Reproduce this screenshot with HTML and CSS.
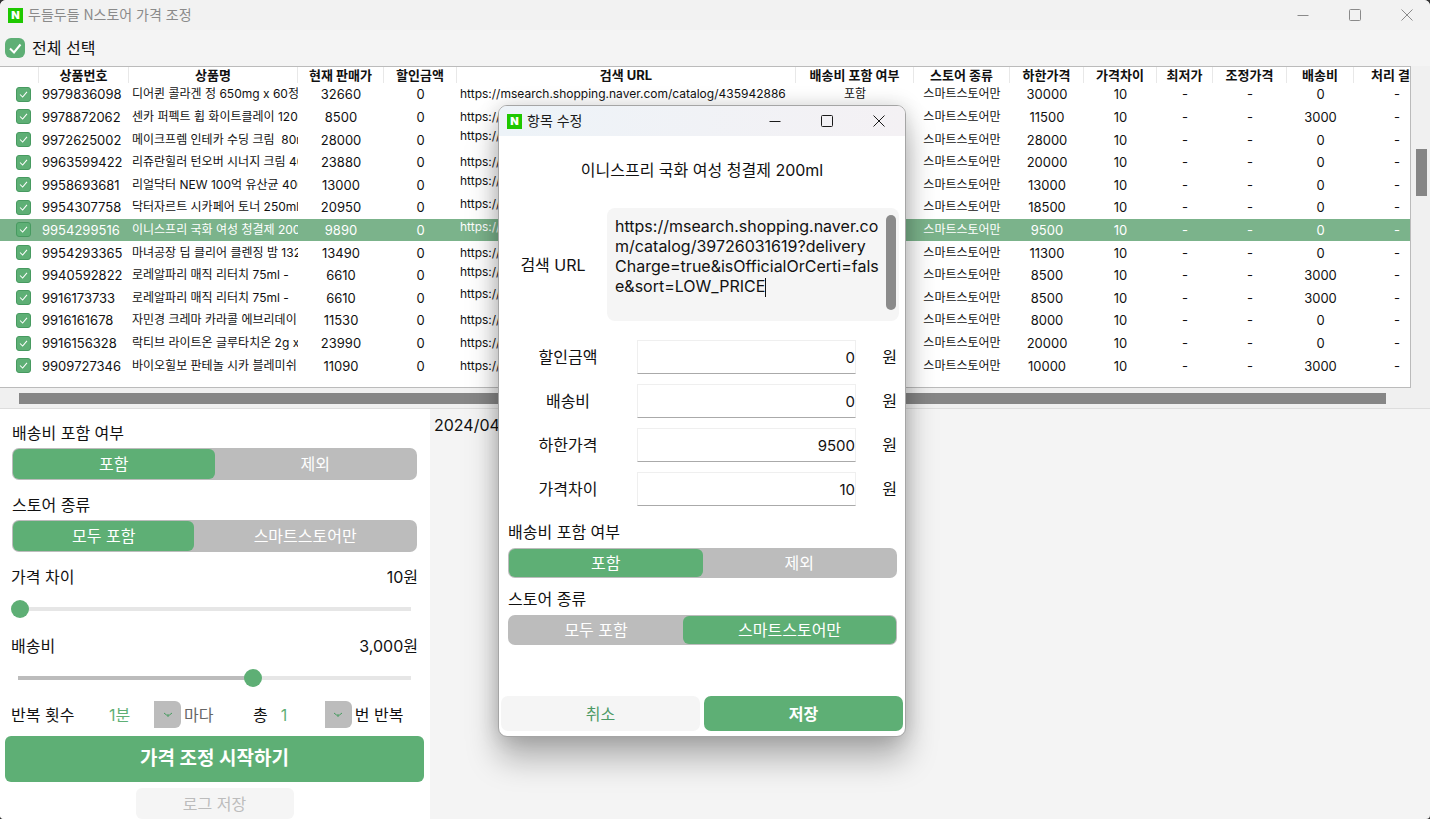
FILE: index.html
```html
<!DOCTYPE html>
<html lang="ko">
<head>
<meta charset="utf-8">
<title>두들두들 N스토어 가격 조정</title>
<link rel="stylesheet" href="styles.css">
</head>
<body>
<div class="app">
  <header class="titlebar">
    <span class="logo">N</span>
    <h1 class="titlebar-text">두들두들 N스토어 가격 조정</h1>
    <button class="win-btn" aria-label="최소화"><svg viewBox="0 0 12 12"><path d="M.5 6.5h11"/></svg></button>
    <button class="win-btn" aria-label="최대화"><svg viewBox="0 0 12 12"><rect x=".5" y=".5" width="11" height="11" rx="1"/></svg></button>
    <button class="win-btn" aria-label="닫기"><svg viewBox="0 0 12 12"><path d="M.5.5l11 11M11.5.5l-11 11"/></svg></button>
  </header>

  <label class="select-all"><input type="checkbox" class="check check-large" checked>전체 선택</label>

  <section class="grid-area">
    <div class="table-view">
      <table class="items">
        <colgroup>
          <col class="c-check"><col class="c-id"><col class="c-name"><col class="c-price"><col class="c-discount"><col class="c-url"><col class="c-include"><col class="c-store"><col class="c-min"><col class="c-gap"><col class="c-low"><col class="c-adjust"><col class="c-ship"><col class="c-result">
        </colgroup>
        <thead>
          <tr><th></th><th>상품번호</th><th>상품명</th><th>현재 판매가</th><th>할인금액</th><th>검색 URL</th><th>배송비 포함 여부</th><th>스토어 종류</th><th>하한가격</th><th>가격차이</th><th>최저가</th><th>조정가격</th><th>배송비</th><th>처리 결과</th></tr>
        </thead>
        <tbody>
          <tr><td class="pick"><input type="checkbox" class="check" aria-label="선택" checked></td><td class="left">9979836098</td><td class="left text">디어퀸 콜라겐 정 650mg x 60정</td><td>32660</td><td>0</td><td class="left text">https://msearch.shopping.naver.com/catalog/435942886</td><td class="text">포함</td><td class="text">스마트스토어만</td><td>30000</td><td>10</td><td>-</td><td>-</td><td>0</td><td>-</td></tr>
          <tr><td class="pick"><input type="checkbox" class="check" aria-label="선택" checked></td><td class="left">9978872062</td><td class="left text">센카 퍼펙트 휩 화이트클레이 120g</td><td>8500</td><td>0</td><td class="left text">https://msearch.shopping.naver.com</td><td class="text">포함</td><td class="text">스마트스토어만</td><td>11500</td><td>10</td><td>-</td><td>-</td><td>3000</td><td>-</td></tr>
          <tr><td class="pick"><input type="checkbox" class="check" aria-label="선택" checked></td><td class="left">9972625002</td><td class="left text">메이크프렘 인테카 수딩 크림 &nbsp;80ml</td><td>28000</td><td>0</td><td class="left text raised">https://msearch.shopping.naver.com</td><td class="text">포함</td><td class="text">스마트스토어만</td><td>28000</td><td>10</td><td>-</td><td>-</td><td>0</td><td>-</td></tr>
          <tr><td class="pick"><input type="checkbox" class="check" aria-label="선택" checked></td><td class="left">9963599422</td><td class="left text">리쥬란힐러 턴오버 시너지 크림 40</td><td>23880</td><td>0</td><td class="left text">https://msearch.shopping.naver.com</td><td class="text">포함</td><td class="text">스마트스토어만</td><td>20000</td><td>10</td><td>-</td><td>-</td><td>0</td><td>-</td></tr>
          <tr><td class="pick"><input type="checkbox" class="check" aria-label="선택" checked></td><td class="left">9958693681</td><td class="left text">리얼닥터 NEW 100억 유산균 400</td><td>13000</td><td>0</td><td class="left text raised">https://msearch.shopping.naver.com</td><td class="text">포함</td><td class="text">스마트스토어만</td><td>13000</td><td>10</td><td>-</td><td>-</td><td>0</td><td>-</td></tr>
          <tr><td class="pick"><input type="checkbox" class="check" aria-label="선택" checked></td><td class="left">9954307758</td><td class="left text">닥터자르트 시카페어 토너 250ml</td><td>20950</td><td>0</td><td class="left text raised">https://msearch.shopping.naver.com</td><td class="text">포함</td><td class="text">스마트스토어만</td><td>18500</td><td>10</td><td>-</td><td>-</td><td>0</td><td>-</td></tr>
          <tr class="selected"><td class="pick"><input type="checkbox" class="check" aria-label="선택" checked></td><td class="left">9954299516</td><td class="left text">이니스프리 국화 여성 청결제 200ml</td><td>9890</td><td>0</td><td class="left text raised">https://msearch.shopping.naver.com</td><td class="text">포함</td><td class="text">스마트스토어만</td><td>9500</td><td>10</td><td>-</td><td>-</td><td>0</td><td>-</td></tr>
          <tr><td class="pick"><input type="checkbox" class="check" aria-label="선택" checked></td><td class="left">9954293365</td><td class="left text">마녀공장 딥 클리어 클렌징 밤 132</td><td>13490</td><td>0</td><td class="left text">https://msearch.shopping.naver.com</td><td class="text">포함</td><td class="text">스마트스토어만</td><td>11300</td><td>10</td><td>-</td><td>-</td><td>0</td><td>-</td></tr>
          <tr><td class="pick"><input type="checkbox" class="check" aria-label="선택" checked></td><td class="left">9940592822</td><td class="left text">로레알파리 매직 리터치 75ml -</td><td>6610</td><td>0</td><td class="left text raised">https://msearch.shopping.naver.com</td><td class="text">포함</td><td class="text">스마트스토어만</td><td>8500</td><td>10</td><td>-</td><td>-</td><td>3000</td><td>-</td></tr>
          <tr><td class="pick"><input type="checkbox" class="check" aria-label="선택" checked></td><td class="left">9916173733</td><td class="left text">로레알파리 매직 리터치 75ml -</td><td>6610</td><td>0</td><td class="left text raised">https://msearch.shopping.naver.com</td><td class="text">포함</td><td class="text">스마트스토어만</td><td>8500</td><td>10</td><td>-</td><td>-</td><td>3000</td><td>-</td></tr>
          <tr><td class="pick"><input type="checkbox" class="check" aria-label="선택" checked></td><td class="left">9916161678</td><td class="left text">자민경 크레마 카라콜 에브리데이</td><td>11530</td><td>0</td><td class="left text">https://msearch.shopping.naver.com</td><td class="text">포함</td><td class="text">스마트스토어만</td><td>8000</td><td>10</td><td>-</td><td>-</td><td>0</td><td>-</td></tr>
          <tr><td class="pick"><input type="checkbox" class="check" aria-label="선택" checked></td><td class="left">9916156328</td><td class="left text">락티브 라이트온 글루타치온 2g x</td><td>23990</td><td>0</td><td class="left text">https://msearch.shopping.naver.com</td><td class="text">포함</td><td class="text">스마트스토어만</td><td>20000</td><td>10</td><td>-</td><td>-</td><td>0</td><td>-</td></tr>
          <tr><td class="pick"><input type="checkbox" class="check" aria-label="선택" checked></td><td class="left">9909727346</td><td class="left text">바이오힐보 판테놀 시카 블레미쉬</td><td>11090</td><td>0</td><td class="left text">https://msearch.shopping.naver.com</td><td class="text">포함</td><td class="text">스마트스토어만</td><td>10000</td><td>10</td><td>-</td><td>-</td><td>3000</td><td>-</td></tr>
        </tbody>
      </table>
    </div>
    <div class="vscroll"><div class="vthumb"></div></div>
  </section>
  <div class="hscroll"><div class="hthumb"></div></div>

  <main class="bottom">
    <section class="panel">
      <div class="group">
        <h2 class="group-label">배송비 포함 여부</h2>
        <div class="segment include">
          <button class="seg on" aria-pressed="true">포함</button>
          <button class="seg" aria-pressed="false">제외</button>
        </div>
      </div>
      <div class="group">
        <h2 class="group-label">스토어 종류</h2>
        <div class="segment store">
          <button class="seg on" aria-pressed="true">모두 포함</button>
          <button class="seg" aria-pressed="false">스마트스토어만</button>
        </div>
      </div>
      <div class="sliders">
        <div class="slider-group">
          <div class="slider-head"><label for="gap">가격 차이</label><output for="gap">10원</output></div>
          <input id="gap" class="slider" type="range" min="10" max="1000" value="10" style="--fill: 0%">
        </div>
        <div class="slider-group">
          <div class="slider-head"><label for="ship">배송비</label><output for="ship">3,000원</output></div>
          <input id="ship" class="slider" type="range" min="0" max="5000" value="3000" style="--fill: 60%">
        </div>
      </div>
      <div class="repeat">
        <label class="repeat-label" for="every">반복 횟수</label>
        <div class="combo">
          <select id="every"><option>1분</option></select>
          <span class="combo-arrow"><svg viewBox="0 0 10 6"><path d="M1 1l2.500 2h3L9 1M4 4h2"/></svg></span>
        </div>
        <span class="repeat-unit">마다</span>
        <label for="times">총</label>
        <div class="combo combo-times">
          <select id="times"><option>1</option></select>
          <span class="combo-arrow"><svg viewBox="0 0 10 6"><path d="M1 1l2.500 2h3L9 1M4 4h2"/></svg></span>
        </div>
        <span>번 반복</span>
      </div>
      <button class="start">가격 조정 시작하기</button>
      <button class="save-log">로그 저장</button>
    </section>
    <section class="log">2024/04</section>
  </main>

  <div class="dialog" role="dialog" aria-labelledby="dialog-title">
    <header class="dialog-bar">
      <span class="logo">N</span>
      <h2 id="dialog-title" class="titlebar-text">항목 수정</h2>
      <button class="win-btn" aria-label="최소화"><svg viewBox="0 0 12 12"><path d="M.5 6.500h11"/></svg></button>
      <button class="win-btn" aria-label="최대화"><svg viewBox="0 0 12 12"><rect x=".5" y=".5" width="11" height="11" rx="1"/></svg></button>
      <button class="win-btn" aria-label="닫기"><svg viewBox="0 0 12 12"><path d="M.5.5l11 11M11.500.5l-11 11"/></svg></button>
    </header>
    <p class="product">이니스프리 국화 여성 청결제 200ml</p>
    <div class="url-row">
      <label for="url">검색 URL</label>
      <div class="url-box">
        <textarea id="url" spellcheck="false">https://msearch.shopping.naver.com/catalog/39726031619?delivery
Charge=true&amp;isOfficialOrCerti=false&amp;sort=LOW_PRICE</textarea>
        <span class="caret"></span>
        <span class="url-thumb"></span>
      </div>
    </div>
    <div class="fields">
      <label for="f1">할인금액</label><input id="f1" type="text" value="0"><span>원</span>
      <label for="f2">배송비</label><input id="f2" type="text" value="0"><span>원</span>
      <label for="f3">하한가격</label><input id="f3" type="text" value="9500"><span>원</span>
      <label for="f4">가격차이</label><input id="f4" type="text" value="10"><span>원</span>
    </div>
    <div class="dialog-groups">
      <div class="group">
        <h3 class="group-label">배송비 포함 여부</h3>
        <div class="segment include">
          <button class="seg on" aria-pressed="true">포함</button>
          <button class="seg" aria-pressed="false">제외</button>
        </div>
      </div>
      <div class="group">
        <h3 class="group-label">스토어 종류</h3>
        <div class="segment store">
          <button class="seg" aria-pressed="false">모두 포함</button>
          <button class="seg on" aria-pressed="true">스마트스토어만</button>
        </div>
      </div>
    </div>
    <footer class="dialog-actions">
      <button class="cancel">취소</button>
      <button class="save">저장</button>
    </footer>
  </div>
</div>
</body>
</html>
```
FILE: styles.css
```css
:root {
  --green: #5eaf75;
  --gray: #bcbcbc;
  --pale: #f5f5f5;
  --thumb: #868686;
}

* { box-sizing: border-box; }

body {
  margin: 0;
  background: #333;
  color: #111;
  font: 16px/24px Inter, "Noto Sans CJK KR", sans-serif;
}

button, input, select, textarea {
  font: inherit;
  color: inherit;
  margin: 0;
  padding: 0;
  border: 0;
  background: none;
}

h1, h2, h3, p { margin: 0; font-size: inherit; font-weight: 400; }

.app {
  position: relative;
  display: flex;
  flex-direction: column;
  min-height: 100vh;
  background: #f4f4f4;
  border-radius: 6px 6px 4px 4px;
  overflow: hidden;
}

/* Window chrome */
.titlebar, .dialog-bar {
  display: flex;
  align-items: center;
  height: 30px;
  padding-left: 8px;
  background: #f2f2f2;
  color: #8a8a8a;
  font-family: "Noto Sans CJK KR", sans-serif;
  font-size: 14px;
}
.titlebar-text { flex: 1; margin-left: 5px; padding-bottom: 3px; }
.logo {
  width: 15px;
  height: 15px;
  background: #1ec800;
  color: #fff;
  font: 900 11px/15px Inter, sans-serif;
  text-align: center;
}
.win-btn {
  display: grid;
  place-items: center;
  width: 52px;
  height: 30px;
}
.titlebar .win-btn:last-child { margin-right: -3px; }
.win-btn svg {
  width: 12px;
  height: 12px;
  fill: none;
  stroke: currentColor;
}

.select-all {
  display: flex;
  align-items: center;
  gap: 7px;
  height: 36px;
  padding-left: 5px;
}
.check {
  appearance: none;
  display: block;
  width: 15px;
  height: 15px;
  margin: 0 auto;
  border: 1px solid #479a60;
  border-radius: 3px;
  background: var(--green) url("data:image/svg+xml,%3Csvg xmlns='http://www.w3.org/2000/svg' viewBox='0 0 15 15'%3E%3Cpath d='M3.500 7.500l3 3 5-6' fill='none' stroke='white' stroke-width='1.200'/%3E%3C/svg%3E") center / 100%;
}
.check-large {
  width: 20px;
  height: 20px;
  margin: 0;
  border: 0;
  border-radius: 6px;
  background-image: url("data:image/svg+xml,%3Csvg xmlns='http://www.w3.org/2000/svg' viewBox='0 0 20 20'%3E%3Cpath d='M5 10.500l4 4 6.500-8' fill='none' stroke='white' stroke-width='2'/%3E%3C/svg%3E");
}

/* Item table */
.grid-area { display: flex; height: 322px; }
.table-view {
  flex: 1;
  min-width: 0;
  overflow: hidden;
  border: solid #bbb;
  border-width: 1px 1px 1px 0;
  background: #fff;
}
.items {
  width: calc(100% + 30px);
  height: 310px;
  table-layout: fixed;
  border-spacing: 0;
  font-size: 13px;
  line-height: 16px;
}
.items th, .items td {
  padding: 0;
  text-align: center;
  white-space: nowrap;
  overflow: hidden;
}
.items thead { height: 16px; }
.items tbody tr { height: 22px; }
.items th { font-weight: 700; border-right: 1px solid #e8e8e8; }
.items .pick { padding-left: 8px; }
.items .left { text-align: left; padding-left: 3px; }
.items .text { font-size: 12px; }
.items .raised { vertical-align: top; }
.selected { background: #7bb38b; color: #fff; }
.c-check { width: 39px; }
.c-id { width: 90px; }
.c-name { width: 169px; }
.c-price { width: 86px; }
.c-discount { width: 73px; }
.c-include { width: 118px; }
.c-store { width: 96px; }
.c-min { width: 74px; }
.c-gap { width: 73px; }
.c-low { width: 56px; }
.c-adjust { width: 74px; }
.c-ship { width: 67px; }
.c-result { width: 86px; }

.vscroll { width: 19px; padding: 83px 3px 0 5px; background: #f0f0f0; }
.vthumb { height: 47px; background: var(--thumb); }
.hscroll {
  height: 21px;
  padding: 5px 44px 0 19px;
  background: #f0f0f0;
  border-bottom: 1px solid #ddd;
}
.hthumb { height: 11px; background: var(--thumb); }

/* Lower area */
.bottom { display: flex; flex: 1; }
.panel {
  display: flex;
  flex-direction: column;
  width: 430px;
  background: #fff;
  padding: 12px 6px 0 5px;
}
.log { flex: 1; padding: 4px; }
.group-label { line-height: 24px; }
.panel .group { padding: 0 7px; margin-bottom: 13px; }
.panel .group-label { margin-bottom: 3px; }
.segment {
  display: grid;
  height: 32px;
  padding: 1px;
  border-radius: 7px;
  background: var(--gray);
  color: #fff;
}
.include { grid-template-columns: 1fr 1fr; }
.store { grid-template-columns: 9fr 11fr; }
.seg { border-radius: 6px; }
.seg.on { background: var(--green); }

.sliders { display: grid; gap: 16px; padding: 0 6px; margin-bottom: 14px; }
.slider-head { display: flex; justify-content: space-between; }
.slider {
  appearance: none;
  display: block;
  width: 100%;
  height: 18px;
  margin-top: 11px;
  background:
    linear-gradient(to right, var(--gray) var(--fill), #e6e6e6 var(--fill)) center / calc(100% - 14px) 4px no-repeat;
}
.slider::-webkit-slider-thumb {
  appearance: none;
  width: 18px;
  height: 18px;
  border-radius: 50%;
  background: var(--green);
}

.repeat { display: flex; align-items: center; padding-left: 6px; }
.repeat-label { width: 98px; }
.combo { position: relative; width: 72px; height: 27px; margin-right: 3px; }
.combo select {
  appearance: none;
  width: 100%;
  height: 27px;
  color: var(--green);
}
.combo-times { width: 71px; margin-left: 13px; }
.combo-arrow {
  position: absolute;
  top: 0;
  right: 0;
  display: grid;
  place-items: center;
  width: 27px;
  height: 27px;
  border-radius: 0 6px 6px 0;
  background: var(--gray);
  pointer-events: none;
}
.combo-arrow svg { width: 10px; height: 6px; fill: none; stroke: #459b5e; }
.repeat-unit { width: 69px; color: #666; }
.start {
  height: 46px;
  margin: 8px 0 6px;
  border-radius: 6px;
  background: var(--green);
  color: #fff;
  font-size: 19px;
  font-weight: 700;
}
.save-log {
  align-self: center;
  width: 158px;
  height: 31px;
  border-radius: 6px;
  background: var(--pale);
  color: var(--gray);
}

/* Edit dialog */
.dialog {
  position: absolute;
  top: 105px;
  left: 498px;
  width: 408px;
  border: 1px solid #a5a5a5;
  border-radius: 9px;
  background: #fff;
  overflow: hidden;
  box-shadow: 0 22px 32px rgba(0, 0, 0, .28), 0 0 20px rgba(0, 0, 0, .16);
}
.dialog-bar {
  background: linear-gradient(to right, #edf3f8, #f4f1f4);
  color: #1a1a1a;
}
.product { margin-top: 22px; text-align: center; }
.url-row {
  display: grid;
  grid-template-columns: 1fr 292px;
  align-items: center;
  margin-top: 26px;
  padding-right: 6px;
  text-align: center;
}
.url-box { position: relative; height: 113px; }
.url-box textarea {
  display: block;
  width: 100%;
  height: 100%;
  padding: 8px 16px 8px 8px;
  border-radius: 8px;
  background: var(--pale);
  line-height: 20px;
  word-break: break-all;
  resize: none;
  overflow: hidden;
  outline: 0;
}
.caret { position: absolute; left: 158px; top: 70px; width: 1px; height: 19px; background: #111; }
.url-thumb { position: absolute; right: 3px; top: 7px; width: 10px; height: 95px; border-radius: 5px; background: #8b8b8b; }
.fields {
  display: grid;
  grid-template-columns: 138px 1fr 49px;
  row-gap: 10px;
  align-items: center;
  margin-top: 19px;
  text-align: center;
}
.fields span { text-align: right; padding-right: 8px; }
.fields input {
  width: 100%;
  height: 34px;
  border: 1px solid #efefef;
  border-bottom-color: #aaa;
  font-size: 15px;
  text-align: right;
}
.dialog-groups { display: grid; gap: 9px; margin-top: 14px; padding: 0 8px 0 9px; }
.dialog-groups .group-label { margin-bottom: 4px; }
.dialog .segment { height: 30px; }
.dialog-actions {
  display: grid;
  grid-template-columns: 1fr 1fr;
  gap: 4px;
  margin-top: 51px;
  padding: 0 2px 5px;
}
.dialog-actions button { height: 35px; border-radius: 7px; }
.cancel { background: var(--pale); color: #4d9a66; }
.save { background: var(--green); color: #fff; font-weight: 700; }
```
